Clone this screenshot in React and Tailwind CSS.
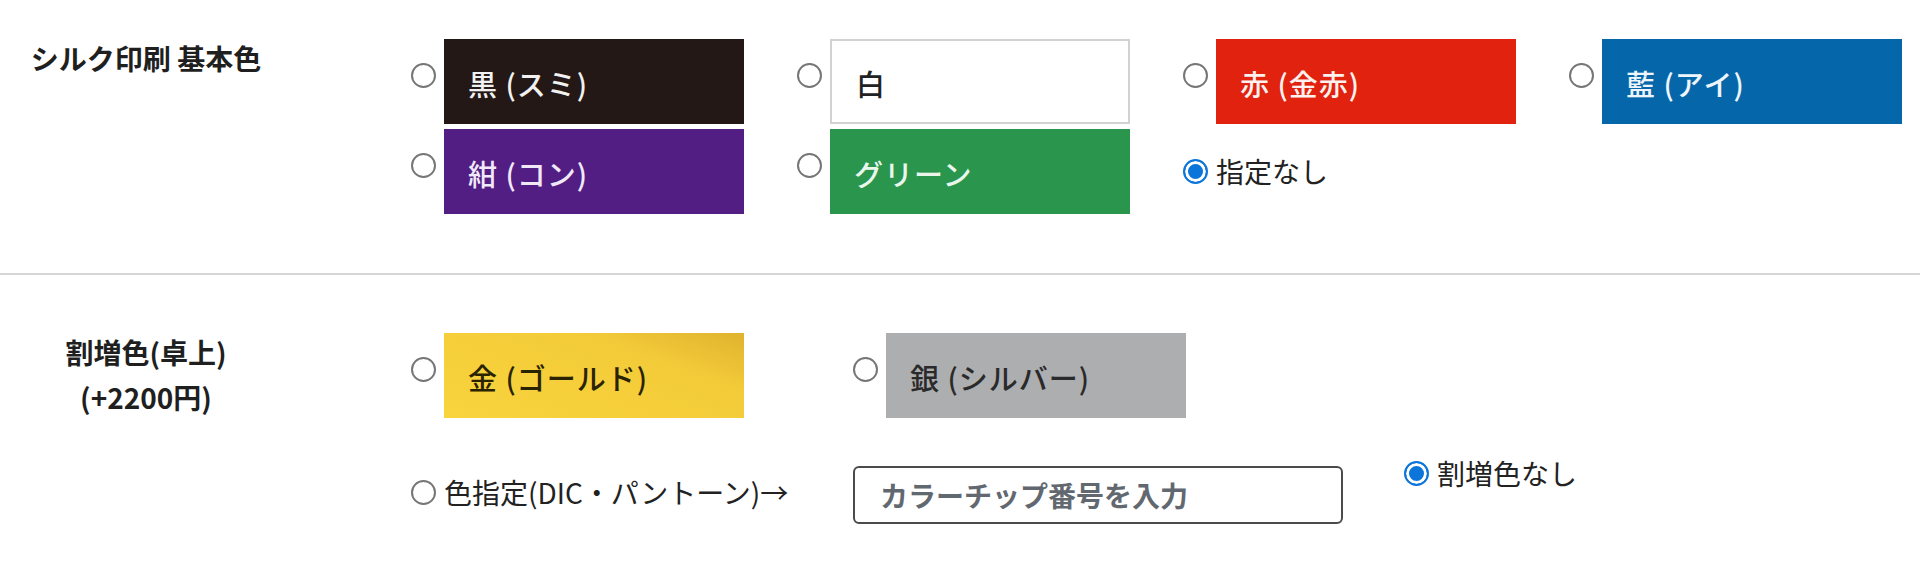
import React from "react";

const radioCls =
  "appearance-none m-0 w-[25px] h-[25px] shrink-0 rounded-full border-2 border-[#767676] bg-white cursor-pointer checked:border-[#0b75d9] checked:bg-[#0b75d9] checked:shadow-[inset_0_0_0_3px_#fff]";

// シルク印刷 基本色
const basicRows = [
  [
    { id: "sumi", label: "黒 (スミ)", cls: "bg-[#231815] text-[#f1f1f1]" },
    { id: "shiro", label: "白", cls: "bg-white border-2 border-[#d2d2d2] text-[#222]" },
    { id: "kinaka", label: "赤 (金赤)", cls: "bg-[#e0220e] text-[#fdf1ef]" },
    { id: "ai", label: "藍 (アイ)", cls: "bg-[#0567a9] text-[#eef5fb]" },
  ],
  [
    { id: "kon", label: "紺 (コン)", cls: "bg-[#521e83] text-[#f1e9f8]" },
    { id: "green", label: "グリーン", cls: "bg-[#29954d] text-[#eaf6ec]" },
  ],
];

function Swatch({ name, label, cls, checked }) {
  return (
    <label className="flex items-start w-[333px] shrink-0 cursor-pointer">
      <input type="radio" name={name} defaultChecked={checked} className={`${radioCls} mt-[24px]`} />
      <span
        className={`ml-[8px] flex items-center w-[300px] h-[85px] pl-[24px] pt-[3px] text-[29px] font-medium leading-none tracking-[1px] ${cls}`}
      >
        {label}
      </span>
    </label>
  );
}

function Choice({ name, label, checked, className = "" }) {
  return (
    <label className={`flex items-center gap-[8px] text-[28px] leading-[45px] text-[#222] cursor-pointer ${className}`}>
      <input type="radio" name={name} defaultChecked={checked} className={radioCls} />
      <span>{label}</span>
    </label>
  );
}

export default function App() {
  return (
    <div className="w-full h-[570px] overflow-hidden bg-white font-['Noto_Sans_CJK_JP','Noto_Sans',sans-serif] text-[#222]">
      {/* 基本色 */}
      <section className="flex pt-[36px] pb-[59px]">
        <div className="w-[292px] shrink-0 text-center text-[28px] font-bold leading-[45px] text-[#1f1f1f]">
          シルク印刷 基本色
        </div>
        <div className="ml-[119px] pt-[3px] flex flex-col gap-[5px]">
          <div className="flex gap-[53px]">
            {basicRows[0].map((c) => (
              <Swatch key={c.id} name="silk" label={c.label} cls={c.cls} />
            ))}
          </div>
          <div className="flex gap-[53px]">
            {basicRows[1].map((c) => (
              <Swatch key={c.id} name="silk" label={c.label} cls={c.cls} />
            ))}
            <Choice name="silk" label="指定なし" checked className="self-center" />
          </div>
        </div>
      </section>

      <div className="h-[2px] bg-[#d6d6d6]"></div>

      {/* 割増色 */}
      <section className="flex pt-[55px]">
        <div className="w-[292px] shrink-0 text-center text-[28px] font-bold leading-[45px] text-[#1f1f1f]">
          割増色(卓上)
          <br />
          (+2200円)
        </div>
        <div className="ml-[119px] pt-[3px] flex flex-col">
          <div className="flex gap-[109px]">
            <Swatch
              name="extra"
              label="金 (ゴールド)"
              cls="bg-[linear-gradient(200deg,#e0b22e_0%,#f3cb39_30%,#f9d43d_100%)] text-[#2a2300]"
            />
            <Swatch name="extra" label="銀 (シルバー)" cls="bg-[#adaeb0] text-[#2a2a2a]" />
          </div>
          <div className="flex items-start mt-[33px]">
            <Choice name="extra" label="色指定(DIC・パントーン)→" className="w-[442px] mt-[19px]" />
            <input
              type="text"
              placeholder="カラーチップ番号を入力"
              className="mt-[15px] w-[490px] h-[58px] border-2 border-[#4b4b4b] rounded-[6px] pl-[25px] text-[28px] font-bold text-[#222] placeholder:text-[#626870] outline-none"
            />
            <Choice name="extra" label="割増色なし" checked className="ml-[61px]" />
          </div>
        </div>
      </section>
    </div>
  );
}
